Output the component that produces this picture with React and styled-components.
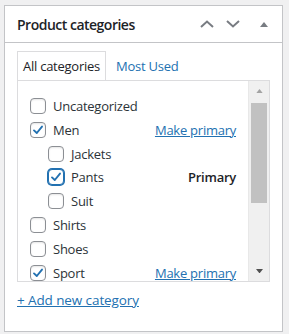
import React from 'react'
import styled, { createGlobalStyle } from 'styled-components'

const GlobalStyle = createGlobalStyle`
  html, body {
    margin: 0;
    background: #f0f0f1;
    font-family: "Open Sans", "Noto Sans", sans-serif;
    color: #1d2327;
  }
`

const categories = [
  { name: 'Uncategorized', level: 0 },
  { name: 'Men', level: 0, checked: true, action: 'link' },
  { name: 'Jackets', level: 1 },
  { name: 'Pants', level: 1, checked: true, focused: true, action: 'primary' },
  { name: 'Suit', level: 1 },
  { name: 'Shirts', level: 0 },
  { name: 'Shoes', level: 0 },
  { name: 'Sport', level: 0, checked: true, action: 'link' },
]

const Page = styled.div`
  padding: 5px 0 0 4px;
`

const Box = styled.div`
  width: 279px;
  height: 327px;
  box-sizing: border-box;
  background: #fff;
  border: 1px solid #c3c4c7;
`

const Header = styled.div`
  display: flex;
  align-items: center;
  height: 36px;
  padding-left: 12px;
  border-bottom: 1px solid #c3c4c7;
`

const Title = styled.h2`
  flex: 1;
  margin: 0;
  font-size: 14px;
  font-weight: 600;
  letter-spacing: -0.5px;
  color: #1d2327;
`

const Handle = styled.button`
  width: ${p => p.$w}px;
  height: 36px;
  padding: 0;
  border: 0;
  background: none;
  display: flex;
  align-items: center;
  justify-content: center;
  color: #787c82;
`

const Inside = styled.div`
  padding: 8px 12px 0;
`

const Tabs = styled.ul`
  display: flex;
  margin: 0;
  padding: 0;
  list-style: none;
  font-size: 13px;
  letter-spacing: -0.25px;
`

const Tab = styled.li`
  height: 27px;
  display: flex;
  align-items: center;
  padding: 0 5px 1px;
  margin-right: 4px;
  border: 1px solid ${p => (p.$active ? '#dcdcde' : 'transparent')};
  border-bottom: 0;
  color: ${p => (p.$active ? '#1d2327' : '#2271b1')};
`

const Panel = styled.div`
  display: flex;
  height: 200px;
  border: 1px solid #dcdcde;
  overflow: hidden;
`

const List = styled.ul`
  flex: 1;
  min-width: 0;
  margin: 0;
  padding: 13px 12px 0 12px;
  list-style: none;
  font-size: 13px;
  letter-spacing: -0.25px;
`

const Row = styled.li`
  display: grid;
  grid-template-columns: 16px 1fr auto;
  column-gap: 7px;
  align-items: center;
  height: 23.85px;
  padding-left: ${p => p.$level * 18}px;
`

const Check = styled.span`
  width: 16px;
  height: 16px;
  box-sizing: border-box;
  border: 1px solid ${p => (p.$focused ? '#2271b1' : '#8c8f94')};
  border-radius: 4px;
  box-shadow: ${p => (p.$focused ? '0 0 0 1px #2271b1' : 'inset 0 1px 2px rgba(0,0,0,.1)')};
  display: flex;
  align-items: center;
  justify-content: center;
  background: #fff;
`

const Name = styled.span`
  color: #2c3338;
`

const MakePrimary = styled.a`
  color: #2271b1;
  text-decoration: underline;
`

const PrimaryLabel = styled.span`
  font-weight: 600;
  color: #1d2327;
`

const Scrollbar = styled.div`
  flex: none;
  width: 20px;
  display: flex;
  flex-direction: column;
  align-items: center;
  background: #f0f0f0;
  border-left: 1px solid #e8e8e8;
`

const ScrollArrow = styled.div`
  height: 20px;
  display: flex;
  align-items: center;
  justify-content: center;
  color: ${p => (p.$dim ? '#a3a3a3' : '#505050')};
`

const Thumb = styled.div`
  width: 16px;
  height: 100px;
  margin-top: 2px;
  background: #c1c1c1;
`

const Spacer = styled.div`
  flex: 1;
`

const AddNew = styled.a`
  display: block;
  margin-top: 9px;
  font-size: 13.5px;
  letter-spacing: -0.1px;
  color: #2271b1;
  text-decoration: underline;
`

const Tick = () => (
  <svg width="12" height="12" viewBox="0 0 12 12">
    <path d="M2 6.4 L4.8 9 L10 2.6" fill="none" stroke="#2271b1" strokeWidth="1.9" strokeLinecap="round" strokeLinejoin="round" />
  </svg>
)

const Chevron = ({ up }) => (
  <svg width="14" height="8" viewBox="0 0 14 8">
    <path d={up ? 'M1 7 L7 1.5 L13 7' : 'M1 1 L7 6.5 L13 1'} fill="none" stroke="currentColor" strokeWidth="2" />
  </svg>
)

const Triangle = ({ down, size = 8 }) => (
  <svg width={size} height={size / 2 + 1} viewBox="0 0 8 5">
    <path d={down ? 'M0 0 H8 L4 5 Z' : 'M0 5 H8 L4 0 Z'} fill="currentColor" />
  </svg>
)

export default function App() {
  return (
    <>
      <GlobalStyle />
      <Page>
        <Box>
          <Header>
            <Title>Product categories</Title>
            <Handle $w={26}><Chevron up /></Handle>
            <Handle $w={26}><Chevron /></Handle>
            <Handle $w={36}><Triangle /></Handle>
          </Header>
          <Inside>
            <Tabs>
              <Tab $active>All categories</Tab>
              <Tab>Most Used</Tab>
            </Tabs>
            <Panel>
              <List>
                {categories.map(c => (
                  <Row key={c.name} $level={c.level}>
                    <Check $focused={c.focused}>{c.checked && <Tick />}</Check>
                    <Name>{c.name}</Name>
                    {c.action === 'link' && <MakePrimary>Make primary</MakePrimary>}
                    {c.action === 'primary' && <PrimaryLabel>Primary</PrimaryLabel>}
                  </Row>
                ))}
              </List>
              <Scrollbar>
                <ScrollArrow $dim><Triangle size={7} /></ScrollArrow>
                <Thumb />
                <Spacer />
                <ScrollArrow><Triangle down size={7} /></ScrollArrow>
              </Scrollbar>
            </Panel>
            <AddNew>+ Add new category</AddNew>
          </Inside>
        </Box>
      </Page>
    </>
  )
}
